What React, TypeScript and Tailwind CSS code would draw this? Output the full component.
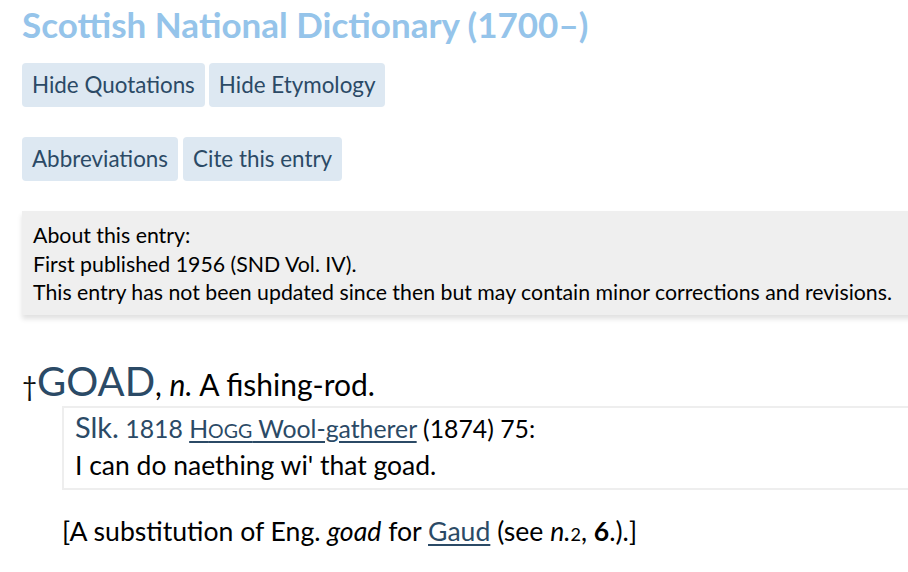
import React from 'react';

const Btn = ({ children }: { children: React.ReactNode }) => (
  <button className="h-[44px] rounded-[4px] bg-[#dde8f2] px-[10px] text-[22.4px] leading-none text-[#2b4a66]">
    {children}
  </button>
);

export default function App() {
  return (
    <div className="min-h-[572px] w-[908px] overflow-hidden bg-white font-['Lato',sans-serif] text-black">
      <div className="pl-[22px]">
        <h1 className="pt-[3px] text-[35px] font-bold leading-[42px] text-[#95c4ea]">
          Scottish National Dictionary (1700–)
        </h1>

        <div className="mt-[18px] flex gap-[4px]">
          <Btn>Hide Quotations</Btn>
          <Btn>Hide Etymology</Btn>
        </div>
        <div className="mt-[30px] flex gap-[5px]">
          <Btn>Abbreviations</Btn>
          <Btn>Cite this entry</Btn>
        </div>

        <div className="mt-[30px] w-[920px] bg-[#efefef] px-[11px] pb-[8px] pt-[10px] text-[21.3px] leading-[28.5px] shadow-[0_4px_5px_rgba(0,0,0,0.12)]">
          <p>About this entry:</p>
          <p>First published 1956 (SND Vol. IV).</p>
          <p>This entry has not been updated since then but may contain minor corrections and revisions.</p>
        </div>

        <div className="mt-[44px] flex items-baseline">
          <span className="text-[26px] leading-none text-[#111]">†</span>
          <span className="text-[40px] leading-[44px] text-[#2b4a66]">GOAD</span>
          <span className="text-[30px] leading-none">
            , <i>n.</i> A fishing-rod.
          </span>
        </div>

        <div className="ml-[40px] mt-[3px] w-[900px] border-2 border-[#eeeeee] px-[11px] pb-[6px] pt-[2px]">
          <p className="text-[24.8px] leading-[34px]">
            <span className="text-[29px] text-[#2b4a66]">Slk.</span>{' '}
            <span className="text-[#2b4a66]">1818</span>{' '}
            <span className="text-[#2b4a66] underline underline-offset-[3px]">
              H<span className="text-[19.5px]">OGG</span> Wool-gatherer
            </span>{' '}
            (1874) 75:
          </p>
          <p className="text-[26.5px] leading-[34px]">I can do naething wi' that goad.</p>
        </div>

        <p className="ml-[40px] mt-[24px] text-[26.6px] leading-[34px]">
          [A substitution of Eng. <i>goad</i> for{' '}
          <span className="text-[#2b4a66] underline underline-offset-[3px]">Gaud</span> (see <i>n.</i>
          <span className="text-[18px]">2</span>, <b>6</b>.).]
        </p>
      </div>
    </div>
  );
}
